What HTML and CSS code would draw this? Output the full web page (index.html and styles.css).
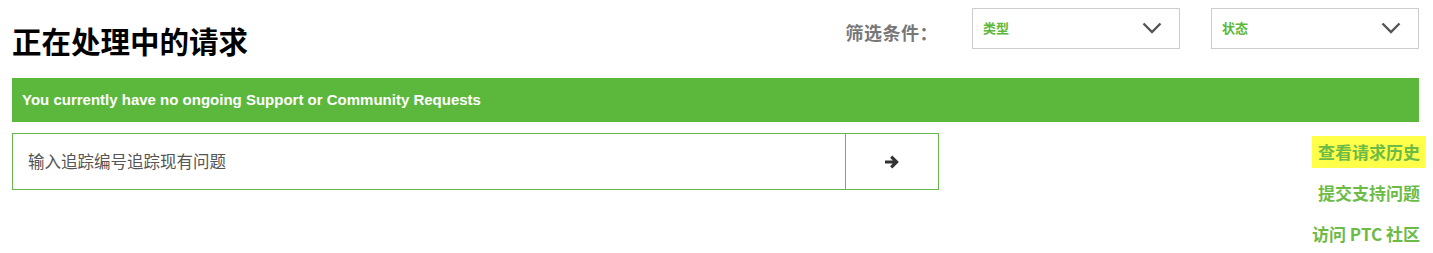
FILE: index.html
```html
<!DOCTYPE html>
<html lang="zh-CN">
<head>
  <meta charset="UTF-8" />
  <meta name="viewport" content="width=device-width, initial-scale=1.0"/>
  <title>正在处理中的请求</title>
  <link rel="stylesheet" href="styles.css">
</head>
<body>
  <div class="page">

    <!-- Header with filters -->
    <div class="header">
      <h1 class="title">正在处理中的请求</h1>
      <div class="filters">
        <span class="filter-label">筛选条件：</span>
        <div class="select">
          <span>类型</span>
          <svg width="20" height="12" viewBox="0 0 20 12"><path d="M1.5 1.5 L10 10 L18.5 1.5" fill="none" stroke="#555" stroke-width="2.4"/></svg>
        </div>
        <div class="select">
          <span>状态</span>
          <svg width="20" height="12" viewBox="0 0 20 12"><path d="M1.5 1.5 L10 10 L18.5 1.5" fill="none" stroke="#555" stroke-width="2.4"/></svg>
        </div>
      </div>
    </div>

    <div class="notice">You currently have no ongoing Support or Community Requests</div>

    <div class="bottom">
      <div class="track">
        <div class="track-input">输入追踪编号追踪现有问题</div>
        <button class="track-button">
          <svg width="16" height="16" viewBox="0 0 16 16"><path d="M1 8 H12.5 M7.2 2.6 L12.6 8 L7.2 13.4" fill="none" stroke="#333" stroke-width="3.2"/></svg>
        </button>
      </div>
      <div class="links">
        <a class="link highlight">查看请求历史</a>
        <a class="link">提交支持问题</a>
        <a class="link">访问 PTC 社区</a>
      </div>
    </div>

  </div>
</body>
</html>
```

FILE: styles.css
```css
body {
  margin: 0;
  font-family: "Noto Sans CJK SC", "Liberation Sans", sans-serif;
  background: #fff;
}

.page {
  padding: 0 14px 0 12px;
}

.header {
  display: flex;
  justify-content: space-between;
  height: 78px;
}

.title {
  margin: 0;
  padding-top: 20px;
  font-size: 29.5px;
  line-height: 40px;
  font-weight: bold;
  color: #000;
}

.filters {
  display: flex;
  align-items: flex-start;
  padding-top: 8px;
}

.filter-label {
  font-size: 18px;
  font-weight: bold;
  color: #777;
  line-height: 48px;
  margin-right: 34px;
  letter-spacing: 0.5px;
}

.select {
  box-sizing: border-box;
  width: 208px;
  height: 41px;
  border: 1px solid #ccc;
  display: flex;
  align-items: center;
  justify-content: space-between;
  padding: 0 17px 2px 10px;
  margin-left: 31px;
}

.select:first-of-type {
  margin-left: 0;
}

.select span {
  font-size: 13px;
  font-weight: bold;
  color: #5cb83c;
}

.notice {
  background-color: #5cb83c;
  color: #fff;
  font-family: "Liberation Sans", Arial, sans-serif;
  font-weight: bold;
  font-size: 15px;
  height: 44px;
  line-height: 44px;
  padding-left: 10px;
}

.bottom {
  display: flex;
  justify-content: space-between;
  padding-top: 11px;
}

.track {
  display: flex;
  width: 927px;
  height: 57px;
  box-sizing: border-box;
  border: 1px solid #6ab84c;
}

.track-input {
  flex: 1;
  border-right: 1px solid #6ab84c;
  font-size: 16.5px;
  color: #555;
  line-height: 55px;
  padding-left: 15px;
}

.track-button {
  width: 92px;
  border: none;
  background: #fff;
  display: flex;
  align-items: center;
  justify-content: center;
  padding: 0;
}

.links {
  display: flex;
  flex-direction: column;
  align-items: flex-end;
  padding-top: 3px;
  margin-right: -7px;
}

.link {
  font-size: 17px;
  font-weight: bold;
  color: #6cbb46;
  line-height: 32px;
  height: 32px;
  padding: 0 6px;
  margin-bottom: 9px;
}

.highlight {
  background-color: #ffff4a;
}
```
